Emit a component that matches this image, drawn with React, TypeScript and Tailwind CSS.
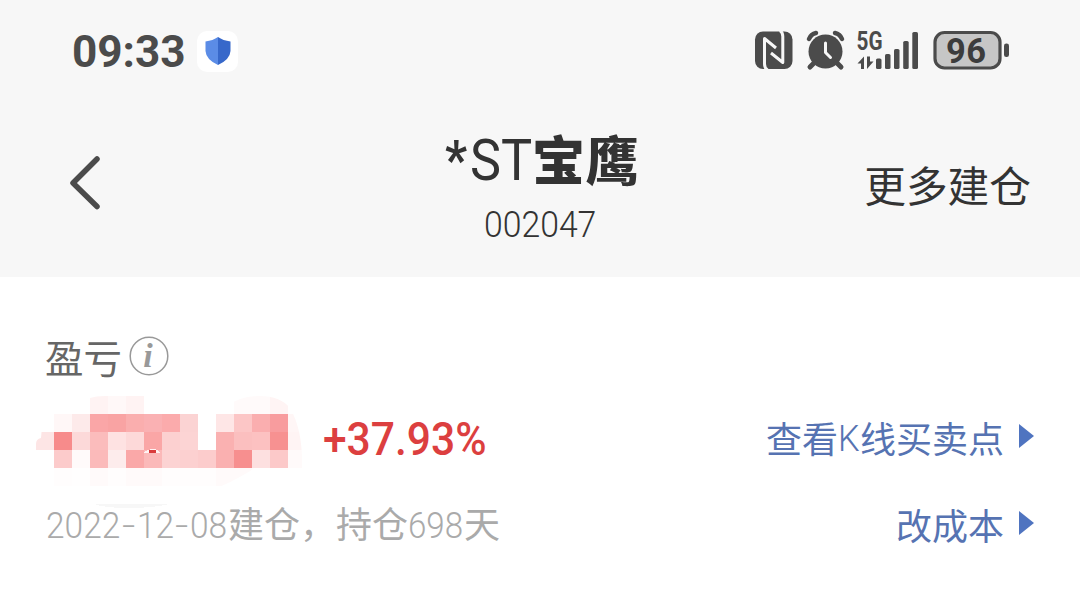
import { clsx } from 'clsx'

const MOSAIC = [
  ['', '', '', '#fff3f3', '#fff8f8', '#fff3f3', '', '', '', '', '', '#fffafa', '#fffafa', '#fff4f4', ''],
  ['', '#fff7f7', '#fdeaea', '#faa6a7', '#f9a3a3', '#faaeae', '#fab1b3', '#fbabac', '#fbd3d3', '', '#fee6e6', '#fcc6c6', '#faaeaf', '#f89c9e', '#fff6f6'],
  ['#fde5e5', '#f78b8b', '#fcd9d9', '#fbbcbc', '#fee2e2', '#fdd9d9', '#faa6a6', '#fcd0d0', '#fcd4d4', '', '#fab1b1', '#fbbfbf', '#fcc1c1', '#f79191', '#fff4f4'],
  ['', '#fccbcb', '#fffafa', '#fbbaba', '#fdecec', '#faa8a8', '#fbb9b9', '#fcd3d3', '#fcd0d0', '#fccccc', '#fab0b0', '#f78f8f', '#fde0e0', '#fcc9c9', '#fffafa'],
  ['', '#fffdfd', '#fffefe', '#fffafa', '#fffdfd', '#fffafa', '#fffafa', '#fffdfd', '#fffdfd', '#fffdfd', '#fffafa', '#fffafa', '#fffdfd', '', ''],
]

// latin and digits, squeezed horizontally inside a box of known width
function Narrow({ text, box, scale }: { text: string; box: string; scale: string }) {
  return (
    <span className={clsx("inline-block whitespace-nowrap font-['Roboto']", box)}>
      <span className={clsx('inline-block origin-left', scale)}>{text}</span>
    </span>
  )
}

function StatusIcons() {
  return (
    <svg width="256" height="52" viewBox="754 25 256 52" fill="#4b4b4b">
      {/* nfc */}
      <rect x="755" y="31.5" width="37.5" height="37.5" rx="8" />
      <path d="M767.500 70q-3-2-3-6V38.500L776 48M780 30.500q2.800 2 2.800 6V62.500L771 53" fill="none" stroke="#f7f7f7" strokeWidth="3" strokeLinejoin="round" />
      {/* alarm */}
      <circle cx="825.500" cy="51.500" r="17" />
      <path d="M809 39q2-5 7-6M842 39q-2-5-7-6" fill="none" stroke="#4b4b4b" strokeWidth="4.500" strokeLinecap="round" />
      <path d="M815 62l-5 5M836 62l5 5" stroke="#4b4b4b" strokeWidth="5" strokeLinecap="round" />
      <path d="M825.500 43v9.500l5 5" fill="none" stroke="#f7f7f7" strokeWidth="3" strokeLinecap="round" strokeLinejoin="round" />
      {/* network */}
      <text x="856.500" y="50" fontSize="25" fontWeight="700" fontFamily="Roboto, sans-serif" textLength="26" lengthAdjust="spacingAndGlyphs">5G</text>
      <path d="M857.500 63.500l6.500-7v12.500h-3v-5.500zM873.500 61.500l-6.500 7.500V56.500h3v5z" />
      <rect x="876" y="58.500" width="5.500" height="10.500" rx="1.600" />
      <rect x="885" y="54" width="5.500" height="15" rx="1.600" />
      <rect x="894" y="49" width="5.500" height="20" rx="1.600" />
      <rect x="903.200" y="41" width="5.500" height="28" rx="1.600" />
      <rect x="912.300" y="32" width="5.700" height="37" rx="1.600" />
      {/* battery */}
      <rect x="935" y="32.500" width="65" height="35.500" rx="9.500" fill="#c6c6c6" stroke="#4b4b4b" strokeWidth="3.200" />
      <rect x="1004" y="43.500" width="5" height="13.500" rx="2.300" />
      <text x="946" y="63" fontSize="34.500" fontWeight="700" fontFamily="Roboto, sans-serif" fill="#3c3c3c" textLength="40" lengthAdjust="spacing">96</text>
    </svg>
  )
}

function ShieldBadge() {
  return (
    <div className="ml-[11px] flex size-[41px] items-center justify-center rounded-[10px] bg-white">
      <svg width="26" height="28" viewBox="0 0 26 28">
        <path d="M13 0Q8 3.500 .5 4.500V14Q1 22.500 13 28z" fill="#5b8ce6" />
        <path d="M13 0Q18 3.500 25.500 4.500V14Q25 22.500 13 28z" fill="#3768ca" />
      </svg>
    </div>
  )
}

function Mosaic() {
  return (
    <svg width="304" height="114" viewBox="0 396 304 114" shapeRendering="crispEdges">
      <clipPath id="smudge">
        <path d="M36 444Q36 439 41 438Q42 412 65 400Q78 396 90 398Q96 396 105 396H144Q190 399 225 407Q240 396 260 396Q280 396 290 408Q303 430 302 468H255Q220 490 200 492L54 487V468L36 450z" />
      </clipPath>
      <g clipPath="url(#smudge)">
        {MOSAIC.map((row, y) =>
          row.map((fill, x) =>
            fill && <rect key={`${x}-${y}`} x={36 + x * 18} y={396 + y * 18} width="18" height="18" fill={fill} />,
          ),
        )}
      </g>
      <path d="M94 504H170Q152 508 130 508Q105 508 94 504z" fill="#f7f7f7" />
      <path d="M143 453Q148 449 153 449Q157 449 161 453z" fill="#fff3f3" />
      <rect x="149" y="450" width="7" height="3" fill="#d93c3c" />
    </svg>
  )
}

function LinkRow({ children }: { children: React.ReactNode }) {
  return (
    <div className="flex items-center text-[36px] leading-[48px] text-[#5673b2]">
      {children}
      <svg className="-mt-[3px] ml-[15px]" width="16" height="26" viewBox="0 0 16 26" fill="#4f74c0">
        <path d="M0 1l15 12L0 25z" />
      </svg>
    </div>
  )
}

export default function App() {
  return (
    <div className="h-[598px] w-[1080px] overflow-hidden bg-white font-['Noto_Sans_CJK_SC',sans-serif]">
      <div className="flex h-[277px] flex-col bg-[#f7f7f7]">
        <div className="flex h-[102px] items-center justify-between pr-[70px] pl-[72px]">
          <div className="flex items-center text-[45px] leading-none font-bold text-[#4b4b4b]">
            <Narrow text="09:33" box="w-[114px]" scale="scale-x-[0.98]" />
            <ShieldBadge />
          </div>
          <StatusIcons />
        </div>
        <div className="grid h-[175px] grid-cols-[376px_1fr_auto] pr-[49px] pl-[69px] text-[#333]">
          <svg className="mt-[53px]" width="32" height="56" viewBox="0 0 32 56" fill="none" stroke="#4b4b4b" strokeWidth="5.500" strokeLinecap="round" strokeLinejoin="round">
            <path d="M28 4L4 28l24 23.500" />
          </svg>
          <div className="flex w-[192px] flex-col items-center pt-[24px]">
            <div className="flex h-[60px] items-start text-[53px] leading-[60px] font-black">
              <span className="-mt-px text-[54px] font-bold">
                <Narrow text="*" box="w-[25px]" scale="scale-x-[0.9]" />
              </span>
              <span className="-mt-px text-[58px] font-normal">
                <Narrow text="ST" box="w-[62px]" scale="scale-x-[0.9]" />
              </span>
              <span className="mt-[2px] -mr-[2px] tracking-[0.5px]">宝鹰</span>
            </div>
            <div className="mt-[5px] text-[37.5px] leading-[60px] font-light">
              <Narrow text="002047" box="w-[114px]" scale="scale-x-[0.9]" />
            </div>
          </div>
          <div className="mt-[52px] justify-self-end text-[41.7px] leading-[60px]">更多建仓</div>
        </div>
      </div>

      <div className="pr-[45px] pl-[45px]">
        <div className="flex items-center pt-[53px] text-[38.5px] leading-[52px] text-[#666]">
          盈亏
          <svg className="ml-[7px]" width="40" height="40" viewBox="0 0 40 40">
            <circle cx="20" cy="20" r="18.800" fill="none" stroke="#999" strokeWidth="1.500" />
            <text x="19" y="30.500" textAnchor="middle" fontSize="34" fontWeight="700" fontStyle="italic" fontFamily="Liberation Serif, serif" fill="#999">i</text>
          </svg>
        </div>
        <div className="flex h-[114px] items-start justify-between pt-[14px]">
          <div className="-ml-[45px] flex items-start">
            <Mosaic />
            <div className="mt-[9px] ml-[19px] text-[46.5px] leading-[60px] font-medium text-[#dc3f3f]">
              <Narrow text="+37.93%" box="w-[165px]" scale="scale-x-[0.915]" />
            </div>
          </div>
          <div className="pt-[15px]">
            <LinkRow>
              查看
              <span className="font-light">
                <Narrow text="K" box="w-[22px]" scale="scale-x-[0.95]" />
              </span>
              线买卖点
            </LinkRow>
          </div>
        </div>
        <div className="flex h-[60px] items-center justify-between pb-[4px]">
          <div className="flex items-baseline pl-px text-[36px] leading-[48px] text-[#aaa]">
            <span className="flex font-light">
              <Narrow text="2022" box="w-[76px]" scale="scale-x-[0.93]" />
              <Narrow text="-" box="w-[15px]" scale="scale-x-[1.3]" />
              <Narrow text="12" box="w-[38px]" scale="scale-x-[0.93]" />
              <Narrow text="-" box="w-[15px]" scale="scale-x-[1.3]" />
              <Narrow text="08" box="w-[38px]" scale="scale-x-[0.93]" />
            </span>
            建仓，持仓
            <span className="font-light">
              <Narrow text="698" box="w-[56px]" scale="scale-x-[0.92]" />
            </span>
            天
          </div>
          <LinkRow>改成本</LinkRow>
        </div>
      </div>
    </div>
  )
}
